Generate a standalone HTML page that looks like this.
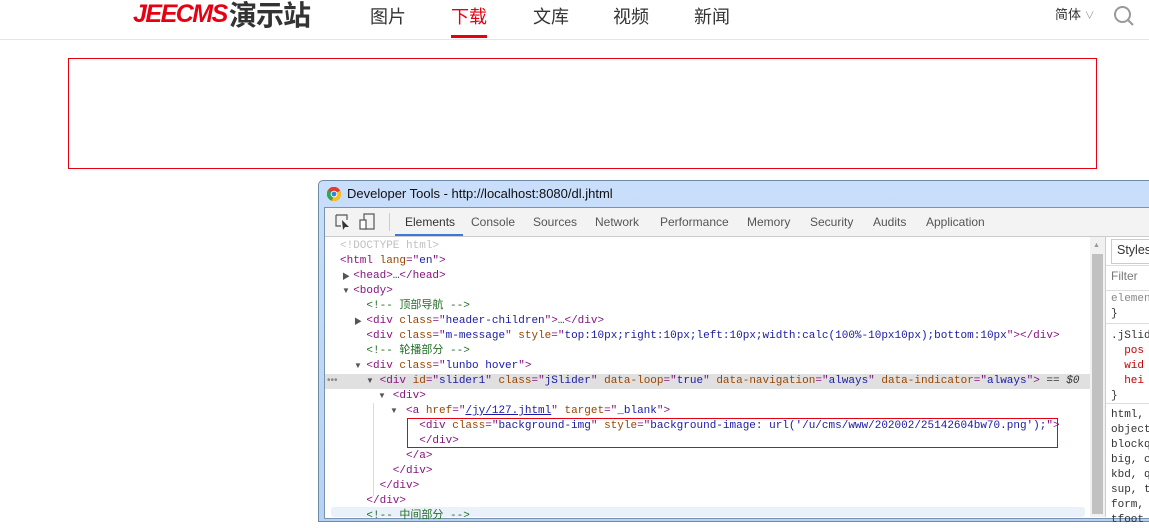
<!DOCTYPE html>
<html><head><meta charset="utf-8"><style>
body{margin:0;width:1149px;height:514px;overflow:hidden;background:#fff;position:relative;font-family:"Liberation Sans","Noto Sans CJK SC",sans-serif}
.a{position:absolute}
.nav{font-size:18px;color:#333;top:3px}
.m{position:absolute;font-family:"Liberation Mono","Noto Sans CJK SC",monospace;font-size:11px;white-space:pre;line-height:15px;color:#881280}
.n{color:#994500}.v{color:#1a1aa6}.c{color:#236e25}.d{color:#c0c0c0}.g{color:#888}
.tri{position:absolute;font-size:8px;color:#555}
.tab{position:absolute;top:215px;font-size:12.5px;color:#555}
</style></head><body>
<div class="a" style="left:133px;top:0;font:italic bold 25px 'Liberation Sans',sans-serif;color:#e60012;letter-spacing:-1.5px;line-height:28px">JEECMS</div>
<div class="a" style="left:229px;top:-3px;font-size:28px;font-weight:bold;color:#333;font-family:'Noto Sans CJK SC',sans-serif;line-height:34px;letter-spacing:-1px">演示站</div>
<div class="a nav" style="left:370px">图片</div>
<div class="a nav" style="left:451px;color:#e60012">下载</div>
<div class="a nav" style="left:533px">文库</div>
<div class="a nav" style="left:613px">视频</div>
<div class="a nav" style="left:694px">新闻</div>
<div class="a" style="left:451px;top:35px;width:36px;height:3px;background:#e60012"></div>
<div class="a" style="left:1055px;top:4px;font-size:13px;color:#333">简体 <span style="color:#999;font-size:10px">∨</span></div>
<svg class="a" style="left:1113px;top:5px" width="22" height="22"><circle cx="9.5" cy="9.5" r="7.5" fill="none" stroke="#999" stroke-width="2"/><path d="M15 15l5 5" stroke="#999" stroke-width="2"/></svg>
<div class="a" style="left:0;top:39px;width:1149px;height:1px;background:#e5e5e5"></div>
<div class="a" style="left:68px;top:58px;width:1027px;height:109px;border:1px solid #e60012"></div>

<div class="a" style="left:318px;top:180px;width:840px;height:340px;border:1px solid #6f8aa6;border-radius:5px 0 0 0;background:linear-gradient(#c9defa,#b7d2f4)"></div>
<svg class="a" style="left:327px;top:187px" width="14" height="14"><circle cx="7" cy="7" r="7" fill="#e33b2e"/><path d="M7 7L1 3A7 7 0 0 0 5 13.7Z" fill="#2da94f"/><path d="M7 7L5 13.7A7 7 0 0 0 13 3.5Z" fill="#fbc116"/><path d="M7 7L13 3.5A7 7 0 0 0 1 3Z" fill="#e33b2e"/><circle cx="7" cy="7" r="3.3" fill="#fff"/><circle cx="7" cy="7" r="2.4" fill="#3b7de0"/></svg>
<div class="a" style="left:347px;top:186px;font-size:13px;color:#111">Developer Tools - http://localhost:8080/dl.jhtml</div>
<div class="a" style="left:324px;top:207px;width:830px;height:310px;background:#fff;border:1px solid #7a93b0"></div>
<div class="a" style="left:325px;top:208px;width:830px;height:28px;background:#f3f3f3;border-bottom:1px solid #ccc"></div>
<svg class="a" style="left:334px;top:213px" width="44" height="18"><path d="M2 2h11v5M2 2v11h5" fill="none" stroke="#555" stroke-width="1.2"/><path d="M8 7l7 7h-4l-2 3z" fill="#333"/><rect x="30" y="1" width="10" height="15" fill="none" stroke="#555" stroke-width="1.2"/><rect x="26" y="7" width="6" height="9" fill="#fff" stroke="#555" stroke-width="1.2"/></svg>
<div class="a" style="left:389px;top:213px;width:1px;height:18px;background:#ccc"></div>
<div class="tab" style="left:405px;color:#333;font-size:12px">Elements</div>
<div class="a" style="left:395px;top:234px;width:68px;height:2px;background:#3879d9"></div>
<div class="tab" style="left:471px;font-size:12px">Console</div>
<div class="tab" style="left:533px;font-size:12px">Sources</div>
<div class="tab" style="left:595px;font-size:12px">Network</div>
<div class="tab" style="left:660px;font-size:12px">Performance</div>
<div class="tab" style="left:747px;font-size:12px">Memory</div>
<div class="tab" style="left:810px;font-size:12px">Security</div>
<div class="tab" style="left:873px;font-size:12px">Audits</div>
<div class="tab" style="left:926px;font-size:12px">Application</div>

<div class="a" style="left:1090px;top:237px;width:15px;height:280px;background:#f1f1f1"></div>
<div class="a" style="left:1092px;top:254px;width:11px;height:260px;background:#c1c1c1"></div>
<div class="a" style="left:1093px;top:242px;font-size:7px;color:#999">▲</div>
<div class="a" style="left:1105px;top:237px;width:1px;height:280px;background:#ccc"></div>
<div class="a" style="left:1111px;top:239px;width:40px;height:23px;border:1px solid #ccc;border-right:none;background:#fff"></div>
<div class="a" style="left:1117px;top:243px;font-size:12.5px;color:#333">Styles</div>
<div class="a" style="left:1106px;top:265px;width:45px;height:24px;border-top:1px solid #ddd;border-bottom:1px solid #ddd"></div>
<div class="a" style="left:1111px;top:269px;font-size:12px;color:#777">Filter</div>
<div class="m g" style="left:1111px;top:292px">elemen
<span style="color:#333">}</span></div>
<div class="a" style="left:1106px;top:323px;width:45px;height:1px;background:#ddd"></div>
<div class="m" style="left:1111px;top:329px;color:#333">.jSlid
  <span style="color:#c80000">pos</span>
  <span style="color:#c80000">wid</span>
  <span style="color:#c80000">hei</span>
}</div>
<div class="a" style="left:1106px;top:403px;width:45px;height:1px;background:#ddd"></div>
<div class="m" style="left:1111px;top:408px;color:#333">html,
object
blockq
big, c
kbd, q
sup, t
form,
tfoot</div>

<div class="a" style="left:325px;top:374px;width:765px;height:15px;background:#e0e0e0"></div>
<div class="a" style="left:331px;top:507px;width:754px;height:10px;background:#eaf1fb;border-radius:3px"></div>
<div class="a" style="left:373px;top:403px;width:1px;height:93px;background:#cde"></div>
<div class="tri" style="left:342px;top:271px">▶</div>
<div class="tri" style="left:342px;top:286px">▼</div>
<div class="tri" style="left:354px;top:316px">▶</div>
<div class="tri" style="left:354px;top:361px">▼</div>
<div class="tri" style="left:366px;top:376px">▼</div>
<div class="tri" style="left:378px;top:391px">▼</div>
<div class="tri" style="left:390px;top:406px">▼</div>
<div class="a" style="left:327px;top:375px;font-size:10px;color:#888">•••</div>
<div class="m" style="left:340px;top:239px"><span class="d">&lt;!DOCTYPE html&gt;</span>
&lt;html <span class="n">lang</span>="<span class="v">en</span>"&gt;
  &lt;head&gt;<span style="color:#333">…</span>&lt;/head&gt;
  &lt;body&gt;
    <span class="c">&lt;!-- 顶部导航 --&gt;</span>
    &lt;div <span class="n">class</span>="<span class="v">header-children</span>"&gt;<span style="color:#333">…</span>&lt;/div&gt;
    &lt;div <span class="n">class</span>="<span class="v">m-message</span>" <span class="n">style</span>="<span class="v">top:10px;right:10px;left:10px;width:calc(100%-10px10px);bottom:10px</span>"&gt;&lt;/div&gt;
    <span class="c">&lt;!-- 轮播部分 --&gt;</span>
    &lt;div <span class="n">class</span>="<span class="v">lunbo hover</span>"&gt;
      &lt;div <span class="n">id</span>="<span class="v">slider1</span>" <span class="n">class</span>="<span class="v">jSlider</span>" <span class="n">data-loop</span>="<span class="v">true</span>" <span class="n">data-navigation</span>="<span class="v">always</span>" <span class="n">data-indicator</span>="<span class="v">always</span>"&gt; <span style="color:#333">== <i>$0</i></span>
        &lt;div&gt;
          &lt;a <span class="n">href</span>="<span class="v" style="text-decoration:underline">/jy/127.jhtml</span>" <span class="n">target</span>="<span class="v">_blank</span>"&gt;
            &lt;div <span class="n">class</span>="<span class="v">background-img</span>" <span class="n">style</span>="<span class="v">background-image: url('/u/cms/www/202002/25142604bw70.png');</span>"&gt;
            &lt;/div&gt;
          &lt;/a&gt;
        &lt;/div&gt;
      &lt;/div&gt;
    &lt;/div&gt;
    <span class="c">&lt;!-- 中间部分 --&gt;</span></div>
<div class="a" style="left:407px;top:418px;width:649px;height:28px;border:1px solid #e60012"></div>
</body></html>
